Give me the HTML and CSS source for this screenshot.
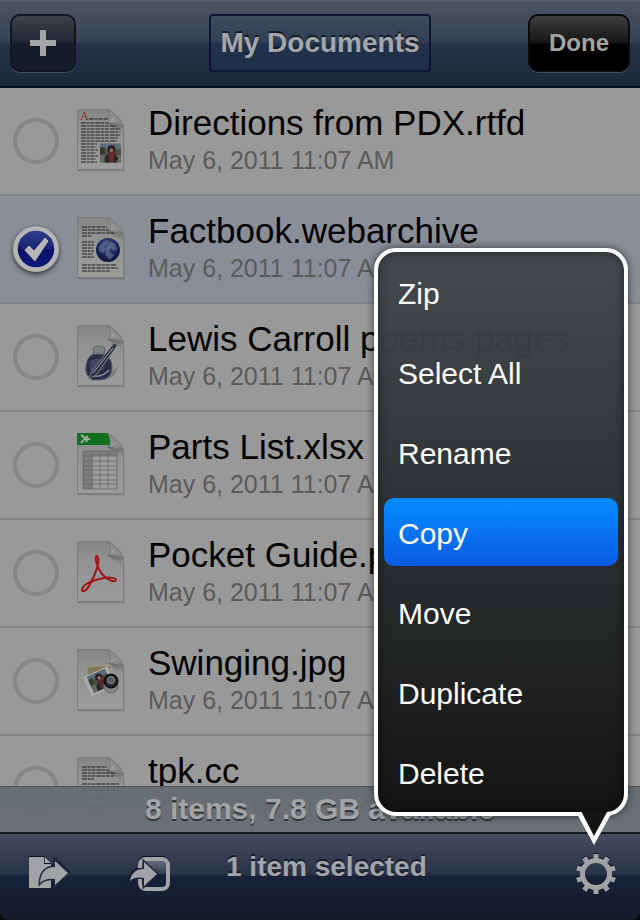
FILE: index.html
```html
<!DOCTYPE html>
<html lang="en">
<head>
<meta charset="utf-8">
<meta name="viewport" content="width=device-width, initial-scale=1">
<title>My Documents</title>
<link rel="stylesheet" href="styles.css">
</head>
<body>
<svg class="defs" aria-hidden="true">
  <defs>
    <linearGradient id="paper" x1="0" y1="0" x2="0" y2="1">
      <stop offset="0" stop-color="#858585"/><stop offset=".3" stop-color="#919191"/><stop offset="1" stop-color="#9c9c9c"/>
    </linearGradient>
    <linearGradient id="curl" x1="0" y1="1" x2="1" y2="0">
      <stop offset="0" stop-color="#b0b0b0"/><stop offset=".5" stop-color="#8c8c8c"/><stop offset="1" stop-color="#777"/>
    </linearGradient>
    <linearGradient id="shade" x1="0" y1="0" x2="0" y2="1">
      <stop offset="0" stop-color="#444"/><stop offset="1" stop-color="#888" stop-opacity="0"/>
    </linearGradient>
    <radialGradient id="globe" cx=".5" cy=".35" r=".65">
      <stop offset="0" stop-color="#3d4a80"/><stop offset=".6" stop-color="#1d2860"/><stop offset="1" stop-color="#0b123a"/>
    </radialGradient>
    <linearGradient id="badge" x1="0" y1="0" x2="0" y2="1">
      <stop offset="0" stop-color="#343f8c"/><stop offset=".5" stop-color="#182376"/><stop offset=".52" stop-color="#07106a"/><stop offset="1" stop-color="#101b7c"/>
    </linearGradient>
    <linearGradient id="glass" x1="0" y1="0" x2="0" y2="1">
      <stop offset="0" stop-color="#69717d"/><stop offset=".5" stop-color="#343d4e"/><stop offset=".52" stop-color="#152038"/><stop offset="1" stop-color="#152038"/>
    </linearGradient>
    <symbol id="page" viewBox="0 0 50 64">
      <path d="M2 62.500h45.500V22" fill="none" stroke="#555" stroke-width="1.500" opacity=".4"/>
      <path d="M1.500 1.500H32Q36 2 47.500 17V61.500H1.500Z" fill="url(#paper)" stroke="#777" stroke-width=".8"/>
      <path d="M33 15L47 17V27L31 15Z" fill="url(#shade)" opacity=".6"/>
      <path d="M31 1.500Q36 8 34 15Q43 13 47.500 18Q45 11 40 7Q35 2 31 1.500Z" fill="url(#curl)" stroke="#6e6e6e" stroke-width=".6"/>
    </symbol>
    <symbol id="photo" viewBox="0 0 22 20">
      <path d="M0 0h22v20H0z" fill="#596a7d"/><path d="M0 6h22v7H0z" fill="#495048"/><path d="M0 12h22v8H0z" fill="#67675d"/>
      <path d="M0 4h5v7H0z" fill="#343c28"/><circle cx="12" cy="6" r="4" fill="#251c1b"/><path d="M8 10l4-3 5 3v7l-3 3H9z" fill="#682b2b"/>
      <path d="M9 11l-4 3v6h5zM15 11l4 4-2 5h-3z" fill="#282525"/><circle cx="12" cy="7" r="2" fill="#936e5d"/>
    </symbol>
  </defs>
</svg>
<div class="app">
  <header class="navbar">
    <button class="nav-button add" type="button" aria-label="Add">
      <svg width="26" height="26" viewBox="0 0 26 26"><path d="M10 0h6v10h10v6H16v10h-6V16H0v-6h10z" fill="#a4a5a7"/></svg>
    </button>
    <button class="title" type="button">My Documents</button>
    <button class="nav-button done" type="button">Done</button>
  </header>

  <main class="files">
    <ul class="list">
      <li class="row">
        <input class="check" type="checkbox" id="f1">
        <svg class="icon" viewBox="0 0 50 64"><use href="#page"/>
          <g stroke="#333" stroke-width="1.300" stroke-dasharray="5 .7 3 .7 4 1" opacity=".8">
            <path d="M13 11h20M5 15h28M5 18h35M5 21h39M5 24h38M5 27h39M5 30h37M5 33h36M5 36h16M5 39h15M5 42h17M5 45h15M5 48h17M5 51h15M5 54h16"/>
          </g>
          <text class="dropcap" x="4" y="12">A</text>
          <use href="#photo" x="24" y="35" width="21" height="20"/>
        </svg>
        <label class="info" for="f1"><span class="name">Directions from PDX.rtfd</span><span class="date">May 6, 2011 11:07 AM</span></label>
      </li>
      <li class="row selected">
        <span class="checkbox">
          <input class="check" type="checkbox" id="f2" checked>
          <svg class="tick" viewBox="0 0 48 48"><circle cx="24" cy="24" r="20.500" fill="url(#badge)" stroke="#b5b5b5" stroke-width="4.500"/><path d="M12 25l5-5 5 5L33 12l4 4-14 21z" fill="#b6b6b6" stroke="#101856" stroke-width=".7"/></svg>
        </span>
        <svg class="icon" viewBox="0 0 50 64"><use href="#page"/>
          <g stroke="#333" stroke-width="1.300" stroke-dasharray="5 .7 3 .7 4 1" opacity=".8">
            <path d="M6 11h25M6 14h27M6 17h32M6 20h10M6 26h12M6 29h12M6 32h11M6 35h12M6 38h11M6 41h12M6 49h34M6 52h36M6 55h28"/>
          </g>
          <circle cx="32" cy="34" r="12" fill="url(#globe)"/>
          <path d="M23 30l5-5 5-1-1 4-4 2 2 3-3 4-4-2zM34 25l5 3 2 5-3 2-4-3-1 4 5 3-4 5-4-4-1-6z" fill="#78819d" opacity=".5"/>
        </svg>
        <label class="info" for="f2"><span class="name">Factbook.webarchive</span><span class="date">May 6, 2011 11:07 AM</span></label>
      </li>
      <li class="row">
        <input class="check" type="checkbox" id="f3">
        <svg class="icon" viewBox="0 0 50 64"><use href="#page"/>
          <path d="M23 54L42 43l-4 9-10 4z" fill="#656565" opacity=".5"/>
          <path d="M17 24q6-4 12 0l-1 8H18z" fill="#7c8080" stroke="#5c6060"/>
          <path d="M17 30h12q8 5 7 15-1 10-11 11H16Q8 51 10 41q1-8 7-11z" fill="#2a2c42" stroke="#666a78"/>
          <path d="M13 38q9-7 16 0l-2 8-12 3z" fill="#454d74" opacity=".75"/><path d="M15 51q10 4 18-5" fill="none" stroke="#888da0" stroke-width="1.500"/>
          <path d="M38 19q3 0 3 3L21 50l-9 6 4-9z" fill="#303342" stroke="#9094a0" stroke-width=".8"/><path d="M37 24L17 49" stroke="#a0a4b4"/>
        </svg>
        <label class="info" for="f3"><span class="name">Lewis Carroll poems.pages</span><span class="date">May 6, 2011 11:07 AM</span></label>
      </li>
      <li class="row">
        <input class="check" type="checkbox" id="f4">
        <svg class="icon" viewBox="0 0 50 64"><use href="#page"/>
          <path d="M1 1h30q3 3 3 12H1z" fill="#136f20"/>
          <path d="M5 3q5 3 6 7M12 4Q8 7 5 11M11 7h3" fill="none" stroke="#a0b0a0" stroke-width="2"/>
          <path d="M7 19h34v38H7z" fill="#9d9d9d"/><path d="M7 19h34v5H7zM7 19h9v38H7z" fill="#7d7d7d"/>
          <path d="M7 19h34v38H7zM16 19v38M24 19v38M32 19v38M7 24h34M7 29h34M7 34h34M7 38h34M7 43h34M7 48h34M7 52h34" fill="none" stroke="#666" stroke-width=".8"/>
        </svg>
        <label class="info" for="f4"><span class="name">Parts List.xlsx</span><span class="date">May 6, 2011 11:07 AM</span></label>
      </li>
      <li class="row">
        <input class="check" type="checkbox" id="f5">
        <svg class="icon" viewBox="0 0 50 64"><use href="#page"/>
          <path d="M21 16C25 19 20 34 13 46C10 52 5 52 6 49C8 44 18 40 28 38C35 37 40 38 40 40C39 43 31 40 26 34C21 28 18 16 21 16Z" fill="none" stroke="#a01419" stroke-width="2" stroke-linejoin="round"/>
        </svg>
        <label class="info" for="f5"><span class="name">Pocket Guide.pdf</span><span class="date">May 6, 2011 11:07 AM</span></label>
      </li>
      <li class="row">
        <input class="check" type="checkbox" id="f6">
        <svg class="icon" viewBox="0 0 50 64"><use href="#page"/>
          <g transform="rotate(-4 22 24)"><path d="M11 18h24v17H11z" fill="#857a58" stroke="#a39c87"/></g>
          <g transform="rotate(-25 23 33)"><path d="M10 23h27v21H10z" fill="#aaa"/><use href="#photo" x="12" y="24" width="23" height="18" preserveAspectRatio="none"/></g>
          <circle cx="35" cy="38" r="7" fill="#858585" stroke="#666"/><circle cx="35" cy="33" r="6.500" fill="#2a2b2e" stroke="#111" stroke-width="2"/><circle cx="35" cy="32" r="3.500" fill="#555961" stroke="#999" stroke-width=".8"/>
        </svg>
        <label class="info" for="f6"><span class="name">Swinging.jpg</span><span class="date">May 6, 2011 11:07 AM</span></label>
      </li>
      <li class="row">
        <input class="check" type="checkbox" id="f7">
        <svg class="icon" viewBox="0 0 50 64"><use href="#page"/>
          <g stroke="#333" stroke-width="1.300" stroke-dasharray="5 .7 3 .7 4 1" opacity=".8">
            <path d="M6 11h25M6 14h27M6 17h33M6 20h32M6 23h12M6 28h37M6 31h36M6 34h37M6 40h34M6 43h37M6 49h34M6 52h36"/>
          </g>
        </svg>
        <label class="info" for="f7"><span class="name">tpk.cc</span><span class="date">May 6, 2011 11:07 AM</span></label>
      </li>
    </ul>
    <p class="status">8 items, 7.8 GB available</p>
  </main>

  <footer class="toolbar">
    <button class="tool" type="button" aria-label="Share">
      <svg width="48" height="48" viewBox="0 0 48 48">
        <path d="M3 7h15v7h7v24H3z" fill="#a1a3a6"/><path d="M19 7l6 6h-6z" fill="#a1a3a6"/>
        <path d="M14 33Q15 17 29 17V11l13 12-13 12v-6Q19 28 14 33z" fill="#a1a3a6" stroke="#222b3e" stroke-width="3" paint-order="stroke"/>
      </svg>
    </button>
    <button class="tool" type="button" aria-label="Move into">
      <svg width="48" height="48" viewBox="0 0 48 48">
        <rect x="14" y="9" width="28" height="30" rx="6" fill="url(#glass)" stroke="#a1a3a6" stroke-width="4"/>
        <path d="M4 31Q6 19 18 19V12l13 12-13 12v-8Q8 26 4 31z" fill="#a1a3a6" stroke="#1d263b" stroke-width="3" paint-order="stroke"/>
      </svg>
    </button>
    <span class="count">1 item selected</span>
    <button class="tool gear" type="button" aria-label="Actions" aria-haspopup="menu" aria-expanded="true">
      <svg width="48" height="48" viewBox="-24 -24 48 48">
        <g fill="none" stroke="#a1a3a6" stroke-width="5">
          <circle r="13.500"/>
          <path d="M0-14V-20M0 14V20"/>
          <path transform="rotate(36)" d="M0-14V-20M0 14V20"/>
          <path transform="rotate(72)" d="M0-14V-20M0 14V20"/>
          <path transform="rotate(108)" d="M0-14V-20M0 14V20"/>
          <path transform="rotate(144)" d="M0-14V-20M0 14V20"/>
        </g>
      </svg>
    </button>
    <div class="menu" role="menu">
      <button class="item" type="button" role="menuitem">Zip</button>
      <button class="item" type="button" role="menuitem">Select All</button>
      <button class="item" type="button" role="menuitem">Rename</button>
      <button class="item active" type="button" role="menuitem">Copy</button>
      <button class="item" type="button" role="menuitem">Move</button>
      <button class="item" type="button" role="menuitem">Duplicate</button>
      <button class="item" type="button" role="menuitem">Delete</button>
      <svg class="tail" width="40" height="40" viewBox="0 0 40 40" aria-hidden="true">
        <path d="M2 4L20 37L36 8L38 4z" fill="#fff"/><path d="M7 3L20 28L33 4V3z" fill="#131415"/>
      </svg>
    </div>
  </footer>
</div>
</body>
</html>
```

FILE: styles.css
```css
* { box-sizing: border-box; }

body {
  margin: 0;
  background: #000;
  font-family: "Liberation Sans", Arial, sans-serif;
}

button {
  margin: 0;
  padding: 0;
  border: 0;
  background: none;
  color: inherit;
  font: inherit;
}

svg { display: block; }

.defs { position: absolute; width: 0; height: 0; }

.app {
  display: flex;
  flex-direction: column;
  height: 100vh;
}

/* Top bar */
.navbar {
  display: grid;
  grid-template-columns: 1fr auto 1fr;
  align-items: center;
  padding: 14px 10px;
  border-bottom: 2px solid #0a101b;
  background: linear-gradient(#4c5460, #364254 48%, #253248 52%, #1b2939);
  box-shadow: inset 0 2px #565d68;
}

.nav-button {
  height: 58px;
  border: 2px solid #101520;
  border-radius: 10px;
  box-shadow: 0 1px #47505e;
}

.add {
  display: grid;
  place-items: center;
  width: 66px;
  background: linear-gradient(#3d424c, #1f2531 50%, #151b27 52%, #151c28);
}

.done {
  justify-self: end;
  padding: 0 19px;
  border-color: #0b0b0d;
  background: linear-gradient(#3e3e3e, #151515 50%, #000 52%);
  color: #a3a3a3;
  font-size: 24px;
  font-weight: bold;
}

.title {
  height: 58px;
  padding: 0 9px;
  border: 2px solid #0d1731;
  border-radius: 4px;
  background: linear-gradient(#404b5d, #303f55 48%, #22314c 52%, #1d2f4a);
  color: #a4a6a9;
  font-size: 28px;
  font-weight: bold;
  text-shadow: 0 -2px #141b28;
}

/* File list */
.files {
  position: relative;
  flex: 1;
  min-height: 0;
  overflow: hidden;
  background: #999;
}

.list {
  margin: 0;
  padding: 0;
  list-style: none;
}

.row {
  display: flex;
  align-items: center;
  height: 108px;
  padding-left: 12px;
  border-bottom: 2px solid #848484;
}

.row.selected {
  border-color: #7f838a;
  background: linear-gradient(#8b8f99, #888d97);
}

.checkbox { display: grid; }

.checkbox > * { grid-area: 1 / 1; }

.check {
  flex: none;
  width: 46px;
  height: 46px;
  margin: 1px;
  border: 4px solid #868686;
  border-radius: 50%;
  appearance: none;
}

.check:checked { box-shadow: 0 2px 5px #333; }

.tick {
  width: 48px;
  height: 48px;
  pointer-events: none;
}

.icon {
  flex: none;
  width: 50px;
  height: 64px;
  margin: 0 22px 2px 16px;
}

.dropcap {
  fill: #8f2424;
  font-family: "Liberation Serif", serif;
  font-size: 12px;
}

.info {
  display: grid;
  gap: 3px;
  padding-bottom: 6px;
  white-space: nowrap;
}

.name {
  color: #000;
  font-size: 35px;
  line-height: 40px;
}

.date {
  color: #5b5b5b;
  font-size: 25px;
  line-height: 28px;
}

.status {
  position: absolute;
  right: 0;
  bottom: 0;
  left: 0;
  margin: 0;
  padding: 5px 0 6px;
  border-top: 1px solid #50565b;
  background: linear-gradient(rgba(99, 107, 115, .92), rgba(104, 110, 116, .95));
  color: #a3a4a5;
  font-size: 30px;
  font-weight: bold;
  line-height: 34px;
  text-align: center;
  text-shadow: 0 2px #34383c;
}

/* Bottom bar */
.toolbar {
  position: relative;
  display: flex;
  align-items: flex-start;
  gap: 52px;
  padding: 18px 20px 22px 26px;
  border-radius: 0 0 8px 8px;
  background: linear-gradient(#454d5b, #293347 48%, #182238 50%, #131b2a);
  box-shadow: inset 0 2px #15191f;
}

.tool {
  flex: none;
  width: 48px;
  height: 48px;
  filter: drop-shadow(0 -1px #0d1422);
}

.gear { margin-left: auto; }

.count {
  color: #a2a4a7;
  font-size: 28px;
  font-weight: bold;
  line-height: 34px;
  text-shadow: 0 -2px #141b28;
}

/* Action menu */
.menu {
  position: absolute;
  right: 12px;
  bottom: calc(100% + 16px);
  display: grid;
  gap: 12px;
  width: 254px;
  padding: 6px;
  border: 4px solid #fff;
  border-radius: 22px;
  background: linear-gradient(rgba(66, 72, 75, .97), rgba(46, 50, 52, .97) 40%, rgba(16, 17, 18, .98)) padding-box;
  box-shadow: 0 0 8px rgba(0, 0, 0, .6), inset 0 0 10px rgba(0, 0, 0, .5);
}

.item {
  height: 68px;
  padding: 4px 14px 0;
  border-radius: 10px;
  color: #fff;
  font-size: 30px;
  line-height: 34px;
  text-align: left;
}

.item.active { background: linear-gradient(#058cff, #0a5be4); }

.tail {
  position: absolute;
  top: calc(100% - 4px);
  right: 10px;
}
```
